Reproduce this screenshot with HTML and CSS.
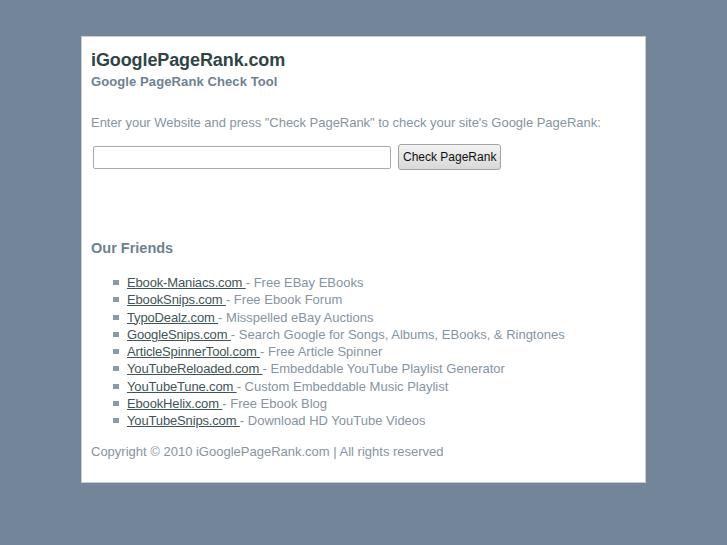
FILE: index.html
```html
<!DOCTYPE html>
<html>
<head>
<meta charset="utf-8">
<link rel="stylesheet" href="styles.css">
</head>
<body>
<div class="page">
  <h1 class="title">iGooglePageRank.com</h1>
  <h2 class="subtitle">Google PageRank Check Tool</h2>
  <p class="intro">Enter your Website and press "Check PageRank" to check your site's Google PageRank:</p>
  <form class="check">
    <input class="url" type="text">
    <button class="btn" type="button">Check PageRank</button>
  </form>
  <h3 class="friends">Our Friends</h3>
  <ul class="list">
    <li><a href="#">Ebook-Maniacs.com </a> - Free EBay EBooks</li>
    <li><a href="#">EbookSnips.com </a> - Free Ebook Forum</li>
    <li><a href="#">TypoDealz.com </a> - Misspelled eBay Auctions</li>
    <li><a href="#">GoogleSnips.com </a> - Search Google for Songs, Albums, EBooks, &amp; Ringtones</li>
    <li><a href="#">ArticleSpinnerTool.com </a> - Free Article Spinner</li>
    <li><a href="#">YouTubeReloaded.com </a> - Embeddable YouTube Playlist Generator</li>
    <li><a href="#">YouTubeTune.com </a> - Custom Embeddable Music Playlist</li>
    <li><a href="#">EbookHelix.com </a> - Free Ebook Blog</li>
    <li><a href="#">YouTubeSnips.com </a> - Download HD YouTube Videos</li>
  </ul>
  <p class="copy">Copyright © 2010 iGooglePageRank.com | All rights reserved</p>
</div>
</body>
</html>
```
FILE: styles.css
```css
html, body { margin: 0; padding: 0; }
body {
  background: #738699;
  font-family: "Liberation Sans", Arial, sans-serif;
  font-size: 13px;
  color: #8594a2;
  padding-top: 36px;
}
.page {
  width: 544px;
  margin-left: 81px;
  background: #fff;
  border: 1px solid #c8ccd0;
  padding: 12px 10px 21px 9px;
}
.title {
  margin: 0;
  font-size: 18px;
  font-weight: bold;
  color: #2f4446;
  line-height: 22px;
  letter-spacing: -0.1px;
}
.subtitle {
  margin: 2px 0 0;
  font-size: 13px;
  font-weight: bold;
  color: #6d8191;
  line-height: 18px;
  letter-spacing: 0.1px;
}
.intro {
  margin: 23px 0 0;
  line-height: 18px;
  letter-spacing: -0.03px;
}
.check {
  margin: 12px 0 0 2px;
  display: flex;
  align-items: center;
  gap: 7px;
}
.url {
  width: 292px;
  height: 19px;
  border: 1px solid #a9a9a9;
  border-radius: 2px;
  padding: 1px 2px;
  margin: 0;
}
.btn {
  height: 26px;
  padding: 0 4px;
  font-family: "Liberation Sans", Arial, sans-serif;
  font-size: 12px;
  color: #111;
  background: linear-gradient(#f2f2f2, #d8d8d8);
  border: 1px solid #a3a3a3;
  border-radius: 3px;
  margin: 0;
}
.friends {
  margin: 68px 0 0;
  font-size: 14.5px;
  font-weight: bold;
  color: #6d8191;
  line-height: 20px;
}
.list {
  margin: 16px 0 0;
  padding-left: 36px;
  list-style: none;
  line-height: 17.3px;
}
.list li { position: relative; }
.list li::before {
  content: "";
  position: absolute;
  left: -14px;
  top: 6px;
  width: 6px;
  height: 5px;
  background: #8a9aa8;
}
.list a { color: #3f5557; text-decoration: underline; letter-spacing: -0.15px; }
.copy {
  margin: 13px 0 0;
  line-height: 18px;
}
```
